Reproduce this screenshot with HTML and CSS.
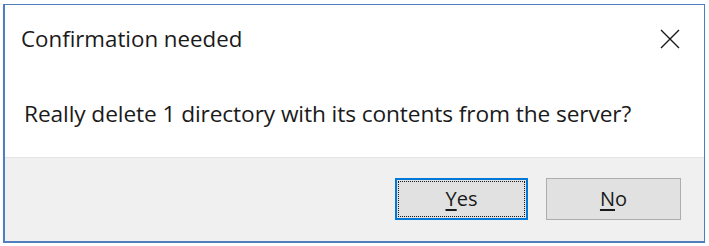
FILE: index.html
```html
<!DOCTYPE html>
<html lang="en">
<head>
    <meta charset="UTF-8">
    <title>Confirmation needed</title>
    <link rel="stylesheet" href="styles.css">
</head>
<body>

<div class="dialog">
    <div class="title-bar">
        <span class="title">Confirmation needed</span>
        <span class="close">
            <svg width="20" height="20" viewBox="0 0 20 20">
                <path d="M1 1 L19 19 M19 1 L1 19" stroke="#1a1a1a" stroke-width="1.4" fill="none"/>
            </svg>
        </span>
    </div>

    <div class="message">Really delete 1 directory with its contents from the server?</div>

    <div class="footer">
        <button class="btn btn-default"><span class="focus"><u>Y</u>es</span></button>
        <button class="btn"><span class="focus-none"><u>N</u>o</span></button>
    </div>
</div>

</body>
</html>
```

FILE: styles.css
```css
body {
    margin: 0;
    background: #fff;
    font-family: "Open Sans", "Noto Sans", sans-serif;
    color: #1a1a1a;
}

.dialog {
    margin: 4px 0 0 3px;
    width: 699px;
    height: 236px;
    border: 1px solid #4f7fbf;
    border-left-width: 2px;
    border-bottom-width: 2px;
    background: #fff;
    display: flex;
    flex-direction: column;
    box-shadow: 0 2px 1px rgba(120, 180, 230, 0.35);
}

.title-bar {
    display: flex;
    align-items: center;
    justify-content: space-between;
    height: 66px;
    flex-shrink: 0;
    padding: 0 24px 0 16px;
}

.title {
    font-size: 22.3px;
}

.close {
    display: flex;
    padding-top: 2px;
}

.message {
    font-size: 22.7px;
    height: 86px;
    flex-shrink: 0;
    display: flex;
    align-items: center;
    padding: 0 0 2px 19px;
    box-sizing: border-box;
    letter-spacing: -0.1px;
}

.footer {
    flex: 1;
    background: #f0f0f0;
    border-top: 1px solid #e3e3e3;
    display: flex;
    justify-content: flex-end;
    align-items: center;
    gap: 18px;
    padding: 0 23px 2px 0;
}

.btn {
    width: 135px;
    height: 42px;
    font-family: inherit;
    font-size: 20px;
    color: #1a1a1a;
    background: #e1e1e1;
    border: 1px solid #adadad;
    padding: 2px;
    margin: 0;
    display: flex;
}

.btn-default {
    border: 2px solid #0078d7;
    width: 133px;
    padding: 1px;
}

.btn span {
    flex: 1;
    display: flex;
    align-items: center;
    justify-content: center;
    border: 1px solid transparent;
}

.btn .focus {
    border: 1px dotted #1a1a1a;
}

.btn u {
    text-underline-offset: 3px;
}
```
